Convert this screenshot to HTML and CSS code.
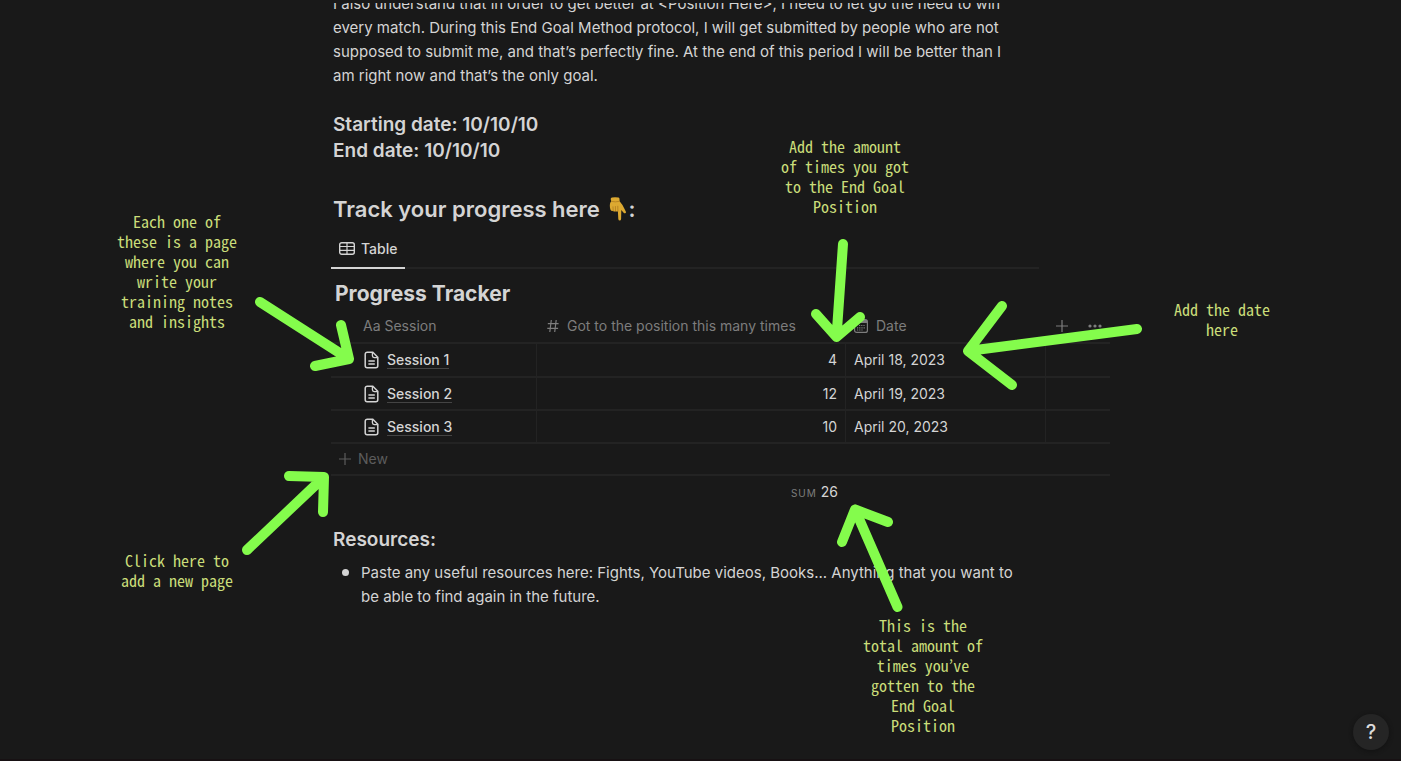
FILE: index.html
```html
<!DOCTYPE html>
<html lang="en">
<head>
<meta charset="utf-8">
<meta name="viewport" content="width=device-width, initial-scale=1">
<title>End Goal Method</title>
<link rel="stylesheet" href="styles.css">
</head>
<body>
<svg class="sprite" aria-hidden="true">
  <symbol id="page-icon" viewBox="0 0 16 18">
    <path d="M3.2 1.2h5.6l5 5v8.6a2 2 0 0 1-2 2H3.2a2 2 0 0 1-2-2V3.2a2 2 0 0 1 2-2z" fill="none" stroke="currentColor" stroke-width="1.5"/>
    <path d="M8.4 1.4v3.4a1.8 1.8 0 0 0 1.8 1.8h3.4M4.4 10h6.4M4.4 13h6.4" fill="none" stroke="currentColor" stroke-width="1.3"/>
  </symbol>
  <symbol id="plus-icon" viewBox="0 0 12 12">
    <path d="M6 0v12M0 6h12" fill="none" stroke="currentColor" stroke-width="1.2"/>
  </symbol>
</svg>
<div class="page">
  <div class="topbar"></div>
  <main class="column">
    <p class="text lead">I also understand that in order to get better at &lt;Position Here&gt;, I need to let go the need to win<br>every match. During this End Goal Method protocol, I will get submitted by people who are not<br>supposed to submit me, and that’s perfectly fine. At the end of this period I will be better than I<br>am right now and that’s the only goal.</p>
    <h3 class="heading">Starting date: 10/10/10<br>End date: 10/10/10</h3>
    <h2 class="heading heading-large">Track your progress here
      <svg class="hand" viewBox="0 0 18 24" role="img" aria-label="pointing down">
        <path d="M3 .5Q6 -.2 9.500 .5q1 .3 1 1.500l.1 2.200q3 3.400 4.300 6.600l2 4q.3 1.400-.8 1.500-1 0-1.700-.9L12.300 13l-.2 9q-.2 1.500-1.400 1.500t-1.400-1.500l-.4-7.800q-1.200.8-2.400 0-1.200.7-2.300-.2Q2 14.200 1.500 12.800.6 10 .9 7.500 1 5.600 2.200 4.300L1.700 2Q1.700.8 3 .5z" fill="#dca931"/>
        <path d="M2.500 4.400q3.800 1 7.800 0M4.200 13.800L4 9.800M6.500 14l-.1-4.500M8.900 14.200l-.1-5" fill="none" stroke="#a9751c" stroke-width=".7" stroke-linecap="round"/>
      </svg>:</h2>
    <nav class="tabs">
      <button class="tab" type="button">
        <svg class="tab-icon" viewBox="0 0 16 13" aria-hidden="true">
          <rect x=".7" y=".7" width="14.600" height="11.600" rx="2" fill="none" stroke="currentColor" stroke-width="1.400"/>
          <path d="M1 4.500h14M1 8.300h14M8 1v11" fill="none" stroke="currentColor" stroke-width="1.200"/>
        </svg>
        Table
      </button>
    </nav>
    <h3 class="heading db-title">Progress Tracker</h3>
    <table class="db">
      <colgroup><col class="col-session"><col class="col-count"><col class="col-date"><col class="col-tools"></colgroup>
      <thead>
        <tr>
          <th class="name-head" scope="col">Aa Session</th>
          <th class="count-head" scope="col"><span class="head-label">
            <svg class="hash" viewBox="0 0 12 14" aria-hidden="true"><path d="M4.300 1L2.800 13M9.200 1L7.700 13M.8 4.600h10.800M.3 9.400h10.800" fill="none" stroke="currentColor" stroke-width="1.200"/></svg>
            Got to the position this many times</span></th>
          <th scope="col"><span class="head-label">
            <svg class="calendar" viewBox="0 0 14 14" aria-hidden="true"><rect x=".6" y=".6" width="12.800" height="12.800" rx="2" fill="none" stroke="currentColor" stroke-width="1.200"/><path d="M1 2.500h12" stroke="currentColor" stroke-width="3"/><path d="M5 6.500h6.500M3 8.800h8.500M3 11h6.500" stroke="currentColor" stroke-width="1.200" stroke-dasharray="1.200 1"/></svg>
            Date</span></th>
          <th><span class="tools">
            <button class="icon-button" type="button" aria-label="Add property"><svg class="plus" aria-hidden="true"><use href="#plus-icon"/></svg></button>
            <button class="icon-button" type="button" aria-label="More"><svg class="dots" viewBox="0 0 14 4" aria-hidden="true"><circle cx="2" cy="2" r="1.600" fill="currentColor"/><circle cx="7" cy="2" r="1.600" fill="currentColor"/><circle cx="12" cy="2" r="1.600" fill="currentColor"/></svg></button>
          </span></th>
        </tr>
      </thead>
      <tbody>
        <tr><td class="name"><span class="name-cell"><svg class="doc" aria-hidden="true"><use href="#page-icon"/></svg><a href="#session-1">Session 1</a></span></td><td class="count">4</td><td>April 18, 2023</td><td></td></tr>
        <tr><td class="name"><span class="name-cell"><svg class="doc" aria-hidden="true"><use href="#page-icon"/></svg><a href="#session-2">Session 2</a></span></td><td class="count">12</td><td>April 19, 2023</td><td></td></tr>
        <tr><td class="name"><span class="name-cell"><svg class="doc" aria-hidden="true"><use href="#page-icon"/></svg><a href="#session-3">Session 3</a></span></td><td class="count">10</td><td>April 20, 2023</td><td></td></tr>
      </tbody>
      <tfoot>
        <tr class="new-row"><td colspan="4"><button class="new-button" type="button"><svg class="plus" aria-hidden="true"><use href="#plus-icon"/></svg>New</button></td></tr>
        <tr class="sum-row"><td></td><td class="count"><span class="sum-label">SUM</span> 26</td><td></td><td></td></tr>
      </tfoot>
    </table>
    <h3 class="heading resources">Resources:</h3>
    <ul class="text list">
      <li><span>Paste any useful resources here: Fights, YouTube videos, Books... Anything that you want to<br>be able to find again in the future.</span></li>
    </ul>

    <aside class="annotations">
      <svg class="arrows" viewBox="0 0 1401 761" aria-hidden="true">
        <path d="M260 302L349 359M341 325L349 359L315 366"/>
        <path d="M843 244L836.500 337M816 314L836.500 337L860 317"/>
        <path d="M1137 329L968 351M1002 306L968 351L1012 385"/>
        <path d="M247 550L324 477M289 476L324 477L323 512"/>
        <path d="M897.500 607L855 509.500M888 522L855 509.500L842 542"/>
      </svg>
      <p class="note note-pages">Each one of<br>these is a page<br>where you can<br>write your<br>training notes<br>and insights</p>
      <p class="note note-count">Add the amount<br>of times you got<br>to the End Goal<br>Position</p>
      <p class="note note-date">Add the date<br>here</p>
      <p class="note note-new">Click here to<br>add a new page</p>
      <p class="note note-sum">This is the<br>total amount of<br>times you’ve<br>gotten to the<br>End Goal<br>Position</p>
    </aside>
  </main>
  <button class="help" type="button" aria-label="Help">?</button>
</div>
</body>
</html>
```
FILE: styles.css
```css
* { box-sizing: border-box; }
body { margin: 0; background: #191919; color: #d4d4d4; font-family: Inter, "Liberation Sans", sans-serif; }
button { background: none; border: 0; padding: 0; margin: 0; font: inherit; color: inherit; }
.sprite { position: absolute; width: 0; height: 0; }

.page { position: relative; min-height: 100vh; overflow: hidden; border-bottom: 2px solid #171113; display: grid; grid-template-columns: minmax(0, 331fr) 708px minmax(0, 362fr); }
.topbar { position: absolute; top: 0; left: 0; right: 0; height: 3px; background: #191919; z-index: 1; }
.column { grid-column: 2; position: relative; }

.text { font-size: 15px; line-height: 24px; }
.lead { margin: -8px 0 0; padding: 0 2px; white-space: nowrap; }
.heading { margin: 24px 0 0; padding: 0 2px; font-size: 19px; line-height: 26px; font-weight: 600; }
.heading-large { margin-top: 29px; font-size: 22px; line-height: 32px; }
.hand { width: 18px; height: 24px; vertical-align: -4px; margin: 0 1px 0 4px; }

.tabs { display: flex; margin-top: 4px; border-bottom: 2px solid #232323; }
.tab { display: flex; align-items: center; gap: 6px; height: 40px; margin-bottom: -2px; padding: 0 8px; border-bottom: 2px solid #d4d4d4; font-size: 14px; font-weight: 500; }
.tab-icon { width: 16px; height: 13px; }
.db-title { margin-top: 11px; padding: 0 4px; font-size: 21px; line-height: 28px; font-weight: 700; }

.db { width: 779px; table-layout: fixed; border-collapse: separate; border-spacing: 0; font-size: 14px; line-height: 20px; }
.col-session { width: 206px; }
.col-count { width: 309px; }
.col-date { width: 200px; }
.col-tools { width: 64px; }
.db th { height: 36px; padding: 2px 8px 0; border-bottom: 2px solid #232323; color: #7d7d7d; font-weight: 400; text-align: left; }
.db .name-head { padding-left: 32px; }
.db .count-head { padding-left: 10px; }
.head-label { display: flex; align-items: center; gap: 8px; white-space: nowrap; }
.hash { width: 12px; height: 14px; }
.calendar { width: 14px; height: 14px; }
.tools { display: flex; align-items: center; justify-content: flex-end; gap: 20px; }
.icon-button { display: flex; align-items: center; }
.plus { width: 12px; height: 12px; }
.dots { width: 14px; height: 4px; }
.db tbody td { height: 33px; padding: 0 8px; border-bottom: 2px solid #232323; border-right: 1px solid #232323; }
.db tbody tr:first-child td { height: 34px; }
.db tbody td:last-child { border-right: 0; }
.db .name { padding-left: 33px; }
.name-cell { display: flex; align-items: center; gap: 7px; }
.name-cell a { color: inherit; font-weight: 500; line-height: 17px; text-decoration: none; border-bottom: 1px solid #444; }
.doc { width: 16px; height: 18px; }
.db .count { text-align: right; }
.new-row td { height: 32px; padding: 0 8px; border-bottom: 2px solid #232323; color: #5c5c5c; }
.new-button { display: flex; align-items: center; gap: 7px; }
.sum-row td { height: 33px; padding: 0 8px; }
.sum-label { color: #7d7d7d; font-size: 10px; letter-spacing: 1px; }

.resources { margin-top: 18px; }
.list { margin: 8px 0 0; padding-left: 11px; list-style: none; white-space: nowrap; }
.list li { display: flex; gap: 12px; }
.list li::before { content: ""; width: 7px; height: 7px; margin-top: 8px; border-radius: 50%; background: #d4d4d4; }

.annotations { position: absolute; top: 0; left: -331px; pointer-events: none; }
.arrows { position: absolute; top: 0; left: 0; width: 1401px; height: 761px; fill: none; stroke: #84fc4c; stroke-width: 10; stroke-linecap: round; stroke-linejoin: round; }
.note { position: absolute; width: 160px; margin: 0; color: #cadd79; font-family: "Noto Sans Mono CJK JP", "Noto Sans Mono CJK SC", "Liberation Mono", monospace; font-size: 16px; line-height: 20px; text-align: center; white-space: nowrap; }
.note-pages { left: 97px; top: 211px; }
.note-count { left: 765px; top: 136px; }
.note-date { left: 1142px; top: 299px; }
.note-new { left: 97px; top: 550px; }
.note-sum { left: 843px; top: 615px; }

.help { position: absolute; right: 12px; bottom: 9px; width: 36px; height: 36px; border-radius: 50%; background: #252525; color: #dcdcdc; font-size: 20px; font-weight: 500; box-shadow: 0 1px 4px #111; }
```
